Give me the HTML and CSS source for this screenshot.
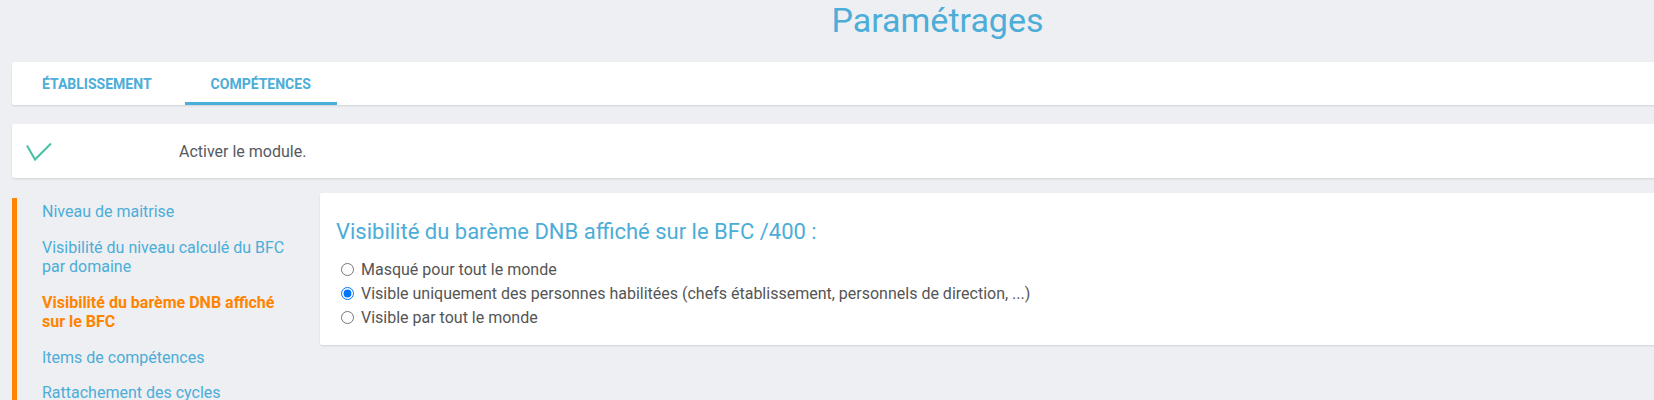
FILE: index.html
```html
<!DOCTYPE html>
<html lang="fr">
<head>
<meta charset="utf-8">
<title>Paramétrages</title>
<link rel="stylesheet" href="styles.css">
</head>
<body>
<div class="page">
  <h1 class="page-title">Paramétrages</h1>

  <nav class="card tabs">
    <a class="tab">Établissement</a>
    <a class="tab tab-active">Compétences</a>
  </nav>

  <div class="card module">
    <span class="module-check">
      <svg width="26" height="20" viewBox="0 0 26 20"><path d="M1 3.5 L9 17.5 L25 1.5" fill="none" stroke="#45c2a4" stroke-width="2"/></svg>
    </span>
    <span class="module-label">Activer le module.</span>
  </div>

  <div class="content">
    <ul class="sidebar">
      <li class="side-item">Niveau de maitrise</li>
      <li class="side-item">Visibilité du niveau calculé du BFC par domaine</li>
      <li class="side-item side-active">Visibilité du barème DNB affiché sur le BFC</li>
      <li class="side-item">Items de compétences</li>
      <li class="side-item">Rattachement des cycles</li>
    </ul>

    <section class="card panel">
      <h2 class="panel-title">Visibilité du barème DNB affiché sur le BFC /400 :</h2>
      <label class="option"><input type="radio" name="vis"> Masqué pour tout le monde</label>
      <label class="option"><input type="radio" name="vis" checked> Visible uniquement des personnes habilitées (chefs établissement, personnels de direction, ...)</label>
      <label class="option"><input type="radio" name="vis"> Visible par tout le monde</label>
    </section>
  </div>
</div>
</body>
</html>
```

FILE: styles.css
```css
html, body {
  margin: 0;
  padding: 0;
}
body {
  background: #eeeff2;
  font-family: Roboto, "Liberation Sans", sans-serif;
  overflow: hidden;
  height: 400px;
}
.page {
  width: 1851px;
  padding-left: 12px;
}
.page-title {
  margin: 0;
  height: 62px;
  font-size: 34px;
  line-height: 40px;
  font-weight: 400;
  color: #4badd8;
  text-align: center;
}
.card {
  background: #fff;
  border-radius: 2px;
  box-shadow: 0 1px 2px rgba(0, 0, 0, 0.12);
}
.tabs {
  display: flex;
  height: 43px;
  padding-left: 4px;
}
.tab {
  display: flex;
  align-items: center;
  padding: 3px 26px 0;
  margin-right: 7px;
  font-size: 14px;
  font-weight: 700;
  text-transform: uppercase;
  color: #4badd8;
  border-bottom: 3px solid transparent;
}
.tab-active {
  border-bottom-color: #4badd8;
}
.module {
  margin-top: 19px;
  height: 54px;
  display: flex;
  align-items: center;
}
.module-check {
  width: 153px;
  padding-left: 14px;
  display: flex;
  align-items: center;
  margin-top: 2px;
}
.module-label {
  font-size: 16px;
  color: #555a60;
}
.content {
  display: flex;
  align-items: flex-start;
  margin-top: 15px;
}
.sidebar {
  list-style: none;
  margin: 5px 15px 0 0;
  padding: 0 13px 0 25px;
  width: 250px;
  flex: none;
  border-left: 5px solid #ff8400;
}
.side-item {
  font-size: 16px;
  line-height: 19.5px;
  padding: 4px 0 12px;
  color: #4badd8;
}
.side-active {
  color: #ff8400;
  font-weight: 700;
}
.panel {
  flex: 1;
  padding: 26px 16px 15px;
}
.panel-title {
  margin: 0 0 14px;
  font-size: 22px;
  line-height: 25px;
  font-weight: 400;
  color: #4badd8;
}
.option {
  display: block;
  font-size: 16px;
  line-height: 24px;
  color: #555;
}
.option input {
  margin: 0 3px 0 5px;
  vertical-align: -1px;
}
```
